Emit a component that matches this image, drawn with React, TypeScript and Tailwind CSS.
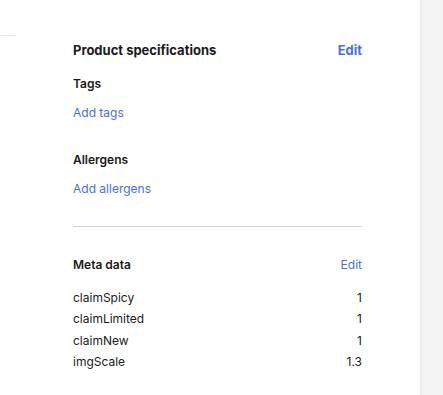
const meta = [
  { key: 'claimSpicy', value: '1' },
  { key: 'claimLimited', value: '1' },
  { key: 'claimNew', value: '1' },
  { key: 'imgScale', value: '1.3' },
];

export default function App() {
  return (
    <div className="flex h-[395px] w-[443px] overflow-hidden bg-white font-['Inter',sans-serif] text-[#1a1a1a]">
      <div className="relative flex-1">
        <div className="absolute left-0 top-[35px] h-px w-[15px] bg-[#e3e8f0]" />
        <div className="ml-[73px] mr-[58px] pt-[42px]">
          <div className="flex items-center justify-between">
            <h2 className="text-[13px] font-bold leading-4">Product specifications</h2>
            <button className="text-[13px] font-bold leading-4 text-[#4a6fdc]">Edit</button>
          </div>

          <h3 className="mt-[18px] text-[12px] font-semibold leading-4">Tags</h3>
          <button className="mt-[13px] block text-[12px] leading-4 text-[#4a6fdc]">Add tags</button>

          <h3 className="mt-[31px] text-[12px] font-semibold leading-4">Allergens</h3>
          <button className="mt-[13px] block text-[12px] leading-4 text-[#4a6fdc]">Add allergens</button>

          <div className="mt-[29px] h-px bg-[#c8d2dd]" />

          <div className="mt-[30px] flex items-center justify-between">
            <h3 className="text-[12px] font-semibold leading-4">Meta data</h3>
            <button className="text-[12px] leading-4 text-[#4a6fdc]">Edit</button>
          </div>

          <div className="mt-[17px] flex flex-col gap-[5.4px]">
            {meta.map((m) => (
              <div key={m.key} className="flex items-center justify-between text-[12px] leading-4">
                <span>{m.key}</span>
                <span>{m.value}</span>
              </div>
            ))}
          </div>
        </div>
      </div>
      <div className="h-full w-[23px] bg-[#f4f4f4] shadow-[inset_3px_0_3px_-2px_rgba(0,0,0,0.06)]" />
    </div>
  );
}
